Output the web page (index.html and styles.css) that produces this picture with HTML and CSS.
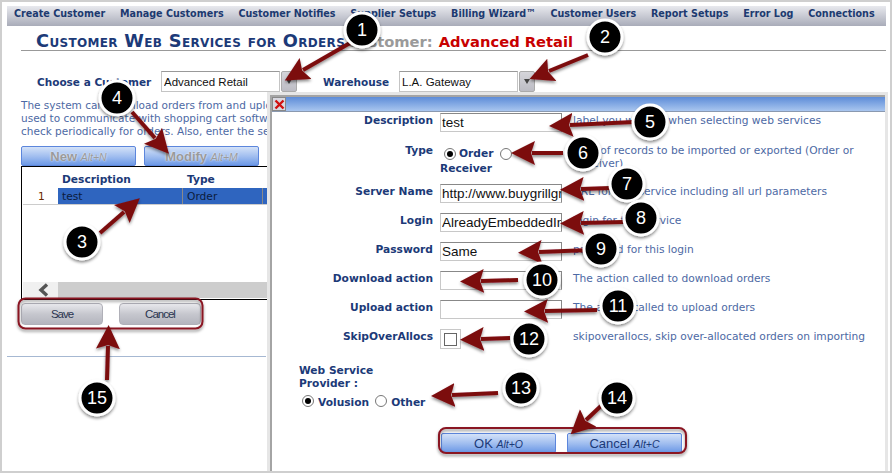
FILE: index.html
```html
<!DOCTYPE html>
<html lang="en">

<head>
    <meta charset="UTF-8">
    <meta name="viewport" content="width=device-width, initial-scale=1.0">
    <title>Customer Web Services for Orders</title>
    <link rel="stylesheet" href="styles.css">
</head>

<body>

    <div class="page">
        <!-- Top menu -->
        <nav class="menu">
            <a>Create Customer</a>
            <a>Manage Customers</a>
            <a>Customer Notifies</a>
            <a>Supplier Setups</a>
            <a>Billing Wizard™</a>
            <a>Customer Users</a>
            <a>Report Setups</a>
            <a>Error Log</a>
            <a>Connections</a>
        </nav>

        <h1 class="heading">
            <span class="heading-title">Customer Web Services for Orders</span>
            <span class="heading-label">Customer:</span>
            <span class="heading-name">Advanced Retail</span>
        </h1>

        <div class="content">
            <!-- Customer and warehouse pickers -->
            <div class="pickers">
                <label class="picker-label">Choose a Customer</label>
                <div class="combo">
                    <input class="combo-input" type="text" value="Advanced Retail">
                    <span class="combo-button"></span>
                </div>
                <label class="picker-label warehouse-label">Warehouse</label>
                <div class="combo">
                    <input class="combo-input" type="text" value="L.A. Gateway">
                    <span class="combo-button"></span>
                </div>
            </div>

            <p class="intro">The system can download orders from and upload order status to web services<br>used to communicate with shopping cart software. The service will<br>check periodically for orders. Also, enter the service details</p>

            <div class="toolbar">
                <button class="blue-btn disabled">New <i>Alt+N</i></button>
                <button class="blue-btn disabled">Modify <i>Alt+M</i></button>
            </div>

            <!-- Web services list -->
            <div class="list">
                <div class="list-head">
                    <span class="cell-num"></span>
                    <span class="cell-desc">Description</span>
                    <span class="cell-type">Type</span>
                </div>
                <div class="list-row">
                    <span class="cell-num">1</span>
                    <span class="cell-desc">test</span>
                    <span class="cell-type">Order</span>
                    <span class="cell-rest"></span>
                </div>
                <div class="list-space"></div>
                <div class="scrollbar">
                    <span class="scroll-left">
                        <svg width="11" height="14" viewBox="0 0 11 14"><path d="M9 1.5 L3 7 L9 12.5" fill="none" stroke="#555" stroke-width="3.4"/></svg>
                    </span>
                </div>
            </div>

            <div class="actions">
                <button class="grey-btn">Save</button>
                <button class="grey-btn">Cancel</button>
            </div>

            <hr class="rule">
        </div>

        <!-- Edit dialog, lies over the page -->
        <div class="dialog">
            <div class="dialog-title">
                <span class="close-btn">
                    <svg width="11" height="11" viewBox="0 0 11 11"><path d="M1.5 1.5 L9.5 9.5 M9.5 1.5 L1.5 9.5" stroke="#d01010" stroke-width="2.4"/></svg>
                </span>
            </div>

            <div class="form">
                <div class="form-row">
                    <label>Description</label>
                    <input type="text" value="test">
                    <span class="help">label you will see when selecting web services</span>
                </div>
                <div class="form-row type-row">
                    <label>Type</label>
                    <div class="options">
                        <span class="radio checked"></span><b>Order</b>
                        <span class="radio"></span>
                        <b class="receiver">Receiver</b>
                    </div>
                    <span class="help">type of records to be imported or exported (Order or Receiver)</span>
                </div>
                <div class="form-row">
                    <label>Server Name</label>
                    <input type="text" value="http://www.buygrillgrates.com/net">
                    <span class="help">URL for this service including all url parameters</span>
                </div>
                <div class="form-row">
                    <label>Login</label>
                    <input type="text" value="AlreadyEmbeddedInUrl">
                    <span class="help">login for this service</span>
                </div>
                <div class="form-row">
                    <label>Password</label>
                    <input type="text" value="Same">
                    <span class="help">password for this login</span>
                </div>
                <div class="form-row">
                    <label>Download action</label>
                    <input type="text" value="">
                    <span class="help">The action called to download orders</span>
                </div>
                <div class="form-row">
                    <label>Upload action</label>
                    <input type="text" value="">
                    <span class="help">The action called to upload orders</span>
                </div>
                <div class="form-row">
                    <label>SkipOverAllocs</label>
                    <span class="check-wrap"><span class="check"></span></span>
                    <span class="help">skipoverallocs, skip over-allocated orders on importing</span>
                </div>
            </div>

            <div class="provider">
                <div class="provider-title">Web Service<br>Provider :</div>
                <div class="provider-options">
                    <span class="radio checked"></span><b>Volusion</b>
                    <span class="radio"></span><b>Other</b>
                </div>
            </div>

            <div class="dialog-buttons">
                <button class="blue-btn">OK <i>Alt+O</i></button>
                <button class="blue-btn">Cancel <i>Alt+C</i></button>
            </div>
        </div>

        <!-- Callouts drawn over the screenshot -->
        <svg class="callouts" width="892" height="474" viewBox="0 0 892 474">
            <defs>
                <marker id="head" markerUnits="userSpaceOnUse" markerWidth="30" markerHeight="30" refX="3" refY="12" orient="auto">
                    <path d="M0 0 L24 12 L0 24 L4 12 Z" fill="#7c0a10"/>
                </marker>
                <filter id="soft" x="-30%" y="-30%" width="160%" height="160%">
                    <feDropShadow dx="0" dy="2" stdDeviation="1.6" flood-color="#000" flood-opacity="0.45"/>
                </filter>
            </defs>

            <g class="outlines">
                <rect x="18.5" y="298.5" width="184" height="30" rx="7"/>
                <rect x="439" y="428" width="247" height="25" rx="7"/>
            </g>

            <g class="arrows">
                <line x1="350" y1="43" x2="303" y2="70"/>
                <line x1="588" y1="55" x2="549" y2="71"/>
                <line x1="100" y1="233" x2="124" y2="212"/>
                <line x1="132" y1="112" x2="155" y2="138"/>
                <line x1="634" y1="122" x2="570" y2="125"/>
                <line x1="563" y1="153" x2="532" y2="153"/>
                <line x1="610" y1="188" x2="581" y2="189"/>
                <line x1="623" y1="222" x2="581" y2="223"/>
                <line x1="590" y1="250" x2="539" y2="252"/>
                <line x1="518" y1="280" x2="481" y2="281"/>
                <line x1="597" y1="310" x2="545" y2="311"/>
                <line x1="510" y1="338" x2="481" y2="339"/>
                <line x1="498" y1="393" x2="452" y2="395"/>
                <line x1="602" y1="405" x2="586" y2="420"/>
                <line x1="107" y1="380" x2="108" y2="346"/>
            </g>

            <g class="badges">
                <circle cx="362" cy="30" r="17"/>
                <circle cx="605" cy="37" r="17"/>
                <circle cx="82" cy="242" r="17"/>
                <circle cx="117" cy="98" r="17"/>
                <circle cx="650" cy="122" r="17"/>
                <circle cx="583" cy="153" r="17"/>
                <circle cx="627" cy="184" r="17"/>
                <circle cx="641" cy="218" r="17"/>
                <circle cx="601" cy="249" r="17"/>
                <circle cx="542" cy="280" r="17"/>
                <circle cx="618" cy="306" r="17"/>
                <circle cx="529" cy="339" r="17"/>
                <circle cx="521" cy="388" r="17"/>
                <circle cx="617" cy="398" r="17"/>
                <circle cx="97" cy="398" r="17"/>
            </g>

            <g class="badge-text">
                <text x="362" y="36">1</text>
                <text x="605" y="43">2</text>
                <text x="82" y="248">3</text>
                <text x="117" y="104">4</text>
                <text x="650" y="128">5</text>
                <text x="583" y="159">6</text>
                <text x="627" y="190">7</text>
                <text x="641" y="224">8</text>
                <text x="601" y="255">9</text>
                <text x="542" y="286">10</text>
                <text x="618" y="312">11</text>
                <text x="529" y="345">12</text>
                <text x="521" y="394">13</text>
                <text x="617" y="404">14</text>
                <text x="97" y="404">15</text>
            </g>
        </svg>
    </div>

</body>

</html>
```

FILE: styles.css
```css
/* General Styles */
* {
    margin: 0;
    padding: 0;
    box-sizing: border-box;
}

body {
    font-family: 'DejaVu Sans', Verdana, sans-serif;
    font-size: 10.67px;
    background-color: #fff;
    overflow: hidden;
}

.page {
    position: relative;
    width: 892px;
    height: 473px;
    border: 2px solid #cfcfcf;
    background-color: #fff;
    overflow: hidden;
}

/* Top menu */
.menu {
    display: flex;
    align-items: center;
    gap: 14.8px;
    height: 20px;
    margin: 4px 4px 0 5px;
    padding: 0 0 5px 7px;
    background: linear-gradient(#e8e9ee, #a9acb9);
    font-family: 'DejaVu Sans Condensed', 'DejaVu Sans', sans-serif;
    font-weight: bold;
    white-space: nowrap;
    color: #1c3a70;
}

.heading {
    display: flex;
    align-items: baseline;
    gap: 2px;
    height: 25px;
    margin: 0 4px 0 19px;
    padding: 4px 0 0 15px;
    border-bottom: 1px solid #999;
    font-size: 14.7px;
    font-weight: bold;
    white-space: nowrap;
}

.heading-title {
    font-size: 17.8px;
    font-variant: small-caps;
    letter-spacing: 0.33px;
    color: #1c3a78;
}

.heading-label {
    color: #9a9a9a;
}

.heading-name {
    margin-left: 4px;
    color: #c80000;
}

.content {
    padding-left: 19px;
}

/* Pickers */
.pickers {
    display: flex;
    align-items: center;
    margin-top: 20px;
    padding-left: 16px;
    height: 21px;
}

.picker-label {
    width: 124px;
    font-size: 10.5px;
    font-weight: bold;
    color: #1c3a78;
    white-space: nowrap;
}

.warehouse-label {
    width: 76px;
    margin-left: 26px;
}

.combo {
    display: flex;
    height: 21px;
}

.combo-input {
    width: 119px;
    height: 21px;
    padding-left: 2px;
    border: 1px solid #c4c4c4;
    border-top-color: #999;
    font-family: 'Liberation Sans', Arial, sans-serif;
    font-size: 11.5px;
    color: #111;
}

.combo-button {
    position: relative;
    width: 16px;
    height: 21px;
    margin-left: 1px;
    border: 1px solid #aaa;
    border-radius: 2px;
    background: linear-gradient(#d5d5da, #bcbcc4);
}

.combo-button::after {
    content: "";
    position: absolute;
    left: 4px;
    top: 7px;
    border-left: 3.5px solid transparent;
    border-right: 3.5px solid transparent;
    border-top: 5px solid #444;
}

.intro {
    margin-top: 7px;
    line-height: 13px;
    font-size: 10.5px;
    white-space: nowrap;
    color: #4d69a4;
}

/* Buttons */
.toolbar {
    display: flex;
    gap: 8px;
    margin-top: 8px;
    height: 20px;
}

.blue-btn {
    width: 115px;
    height: 20px;
    border: 1px solid #5c86dc;
    border-radius: 2px;
    background: linear-gradient(#d4e2f8, #9ebcef 55%, #6d99e6);
    font-family: 'Liberation Sans', Arial, sans-serif;
    font-size: 13px;
    color: #1c3a78;
}

.blue-btn i {
    font-size: 10.5px;
}

.blue-btn.disabled {
    font-weight: bold;
    color: #9a9a9a;
    text-shadow: 0 0 2px #fff;
}

.blue-btn.disabled i {
    font-weight: normal;
}

/* List */
.list {
    display: flex;
    flex-direction: column;
    width: 300px;
    height: 134px;
    border: 1px solid #000;
}

.list-head,
.list-row {
    display: flex;
    align-items: center;
}

.list-head {
    height: 21px;
    padding-top: 3px;
    font-weight: bold;
    color: #1c3a78;
}

.list-row {
    height: 17px;
    margin-left: 1px;
    border-bottom: 1px solid #ccc;
    color: #0c1c3c;
}

.cell-num {
    width: 35px;
    padding-left: 15px;
    color: #6a2a00;
}

.list-head .cell-num {
    width: 36px;
}

.cell-desc {
    width: 125px;
    padding-left: 4px;
}

.cell-type {
    width: 80px;
    padding-left: 4px;
}

.list-row .cell-desc,
.list-row .cell-type,
.cell-rest {
    height: 16px;
    line-height: 17px;
    background-color: #2f65bf;
    border-right: 1px solid #8a8a8a;
}

.cell-rest {
    flex: 1;
    border-right: none;
}

.list-space {
    flex: 1;
}

.scrollbar {
    display: flex;
    height: 16px;
    margin: 0 0 1px 1px;
    background-color: #cdcdcd;
}

.scroll-left {
    display: flex;
    align-items: center;
    justify-content: center;
    width: 35px;
    padding-left: 6px;
    background-color: #f0f0f0;
}

.actions {
    display: flex;
    gap: 16px;
    margin-top: 3px;
}

.grey-btn {
    width: 82px;
    height: 22px;
    border: 1px solid #b0b0b8;
    border-radius: 4px;
    background: linear-gradient(#e8e8ec, #c6c7ce 50%, #b4b5be);
    font-family: 'Liberation Sans', Arial, sans-serif;
    font-size: 11.5px;
    letter-spacing: -1px;
    color: #2a3550;
}

.rule {
    width: 259px;
    margin: 31px 0 0 -14px;
    border: none;
    border-top: 1px solid #a6b8d2;
}

/* Dialog */
.dialog {
    position: absolute;
    left: 268px;
    top: 93px;
    bottom: 0;
    width: 615px;
    border-top: 2px solid #a4a4a4;
    border-left: 2px solid #a4a4a4;
    background-color: #fff;
    box-shadow: 0 0 0 3px #e6e6e6;
}

.dialog-title {
    display: flex;
    align-items: center;
    height: 15px;
    border-bottom: 1px solid #8a99b0;
    background: linear-gradient(#5d8cd8, #a9c6ef);
}

.close-btn {
    display: flex;
    align-items: center;
    justify-content: center;
    width: 14px;
    height: 14px;
    border: 1px solid #888;
    background-color: #d8d8e0;
}

.form {
    padding-top: 1px;
}

.form-row {
    display: grid;
    grid-template-columns: 161px 122px 1fr;
    column-gap: 7px;
    height: 29px;
}

.form-row label {
    padding-top: 1px;
    text-align: right;
    font-weight: bold;
    color: #1c3a78;
    white-space: nowrap;
}

.form-row input {
    width: 122px;
    height: 19px;
    padding-left: 1px;
    border: 1px solid #c8c8c8;
    border-top-color: #888;
    border-right-color: #888;
    font-family: 'Liberation Sans', Arial, sans-serif;
    font-size: 13.5px;
    color: #111;
}

.help {
    margin-left: 4px;
    padding-top: 1px;
    line-height: 13px;
    color: #4d69a4;
}

.type-row {
    height: 42px;
}

.type-row label {
    padding-top: 2px;
}

.type-row .help {
    padding-top: 2px;
}

.options {
    display: flex;
    flex-wrap: wrap;
    align-items: center;
    align-content: flex-start;
    padding-top: 4px;
    line-height: 15px;
    font-weight: bold;
    color: #1c3a78;
}

.options .radio:first-child {
    margin-left: 4px;
    margin-right: 3px;
}

.options b + .radio {
    margin-left: 7px;
}

.receiver {
    width: 100%;
}

.radio {
    position: relative;
    display: inline-block;
    flex: none;
    width: 12px;
    height: 12px;
    border: 1px solid #777;
    border-radius: 50%;
    background-color: #fff;
}

.radio.checked::after {
    content: "";
    position: absolute;
    left: 2px;
    top: 2px;
    width: 6px;
    height: 6px;
    border-radius: 50%;
    background-color: #000;
}

.check-wrap {
    display: flex;
    align-items: center;
    justify-content: center;
    width: 21px;
    height: 20px;
    border: 1px solid #c8c8c8;
}

.check {
    width: 13px;
    height: 13px;
    border: 1px solid #666;
}

.provider {
    margin: 6px 0 0 27px;
    line-height: 13px;
    font-weight: bold;
    color: #1c3a78;
}

.provider-options {
    display: flex;
    align-items: center;
    gap: 4px;
    margin: 3px 0 0 3px;
}

.provider-options b {
    padding-top: 3px;
}

.provider-options b + .radio {
    margin-left: 2px;
}

.dialog-buttons {
    display: flex;
    gap: 11px;
    margin: 24px 0 0 169px;
}

/* Callouts */
.callouts {
    position: absolute;
    left: -2px;
    top: -2px;
}

.outlines rect {
    fill: none;
    stroke: #8a1422;
    stroke-width: 2;
    filter: url(#soft);
}

.arrows {
    filter: url(#soft);
}

.arrows line {
    stroke: #7c0a10;
    stroke-width: 4;
    marker-end: url(#head);
}

.badges circle {
    fill: #000;
    stroke: #fff;
    stroke-width: 3;
    filter: url(#soft);
}

.badge-text text {
    font-family: 'Liberation Sans', Arial, sans-serif;
    font-size: 18px;
    text-anchor: middle;
    fill: #fff;
}
```
